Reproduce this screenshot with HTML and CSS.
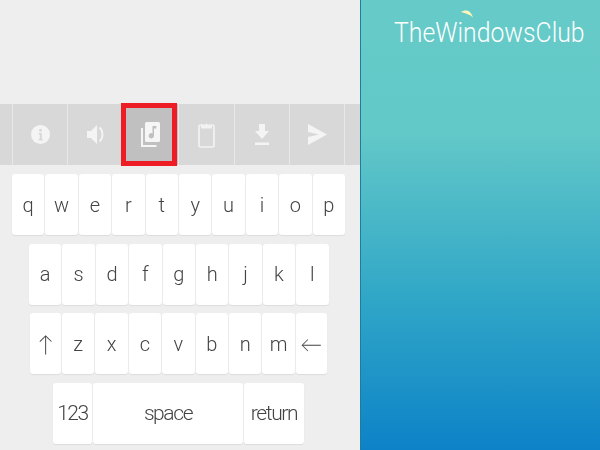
FILE: index.html
```html
<!DOCTYPE html>
<html lang="en">
<head>
    <meta charset="UTF-8">
    <title>Keyboard</title>
    <link rel="stylesheet" href="styles.css">
</head>
<body>
    <div class="phone">
        <div class="preview"></div>
        <div class="toolbar">
            <div class="tool tool-stub"></div>
            <div class="tool">
                <svg width="19" height="19" viewBox="0 0 19 19"><circle cx="9.500" cy="9.500" r="9.500" fill="#f4f4f4"/><circle cx="9.500" cy="5.200" r="1.500" fill="#d8d8d8"/><path d="M7.800 8h3v6h1v1.500H7.800V14h1V9.500h-1z" fill="#d8d8d8"/></svg>
            </div>
            <div class="tool">
                <svg width="17" height="21" viewBox="0 0 17 21"><path d="M0 7h4l6-6v19l-6-6H0z" fill="#f4f4f4"/><path d="M12.500 3.500c4 3.500 4 10.500 0 14" fill="none" stroke="#f4f4f4" stroke-width="1.800"/></svg>
            </div>
            <div class="tool tool-active">
                <svg width="19" height="25" viewBox="0 0 19 25"><rect x="4" y="0" width="15" height="20" rx="1.500" fill="#f6f6f6"/><path d="M11.500 4h3.800v2.400h-2.300v7.400a2.700 2.700 0 1 1-1.500-2.400z" fill="#c0c0c0"/><path d="M1 6v18h14.500" fill="none" stroke="#f6f6f6" stroke-width="2"/></svg>
            </div>
            <div class="tool">
                <svg width="17" height="27" viewBox="0 0 17 27"><path d="M4 4H2.500Q1 4 1 5.500v19Q1 26 2.500 26h12q1.500 0 1.500-1.500v-19Q16 4 14.500 4H13" fill="none" stroke="#f2f2f2" stroke-width="1.700"/><path d="M3 3.500h4.500a1 1 0 0 1 2 0H14v4H3z" fill="#f2f2f2"/></svg>
            </div>
            <div class="tool">
                <svg width="14" height="21" viewBox="0 0 14 21"><path d="M4 0h6v7h4l-7 8-7-8h4z" fill="#f4f4f4"/><rect x="0" y="18.500" width="14" height="2.500" fill="#f4f4f4"/></svg>
            </div>
            <div class="tool">
                <svg width="19" height="21" viewBox="0 0 19 21"><path d="M0 0l19 10.500L0 21v-8l11-2.500L0 8z" fill="#f4f4f4"/></svg>
            </div>
            <div class="tool tool-end"></div>
        </div>
        <div class="keyboard">
            <div class="row row-top">
                <div class="key">q</div><div class="key">w</div><div class="key">e</div><div class="key">r</div><div class="key">t</div><div class="key">y</div><div class="key">u</div><div class="key">i</div><div class="key">o</div><div class="key">p</div>
            </div>
            <div class="row row-home">
                <div class="key">a</div><div class="key">s</div><div class="key">d</div><div class="key">f</div><div class="key">g</div><div class="key">h</div><div class="key">j</div><div class="key">k</div><div class="key">l</div>
            </div>
            <div class="row row-shift">
                <div class="key key-arrow">↑</div><div class="key">z</div><div class="key">x</div><div class="key">c</div><div class="key">v</div><div class="key">b</div><div class="key">n</div><div class="key">m</div><div class="key key-arrow">←</div>
            </div>
            <div class="row row-bottom">
                <div class="key key-word">123</div><div class="key key-word">space</div><div class="key key-word">return</div>
            </div>
        </div>
    </div>
    <div class="side">
        <div class="logo">
            <span class="logo-text">TheWindowsClub</span>
            <svg class="logo-moon" width="12" height="8" viewBox="0 0 12 8"><path d="M0 2C4-.5 9.500-.5 12 7.500 9 4.500 5 3.500 0 2z" fill="#fdf6b8"/></svg>
        </div>
    </div>
</body>
</html>
```

FILE: styles.css
```css
html, body {
    margin: 0;
    height: 100%;
}
body {
    display: flex;
    width: 600px;
    height: 450px;
    overflow: hidden;
    font-family: Roboto, Lato, sans-serif;
}
.phone {
    flex: 0 0 361px;
    background: #eeeeee;
    border-right: 1px solid #1a7f9e;
    box-sizing: border-box;
}
.preview {
    height: 104px;
}
.toolbar {
    display: flex;
    height: 61px;
    background: #d8d8d8;
}
.tool {
    position: relative;
    flex: 0 0 55.4px;
    display: flex;
    align-items: center;
    justify-content: center;
    box-sizing: border-box;
    border-right: 1px solid #e8e8e8;
}
.tool-stub {
    flex-basis: 13px;
}
.tool-end {
    flex: 1;
    border-right: 0;
}
.tool-active {
    background: #c0c0c0;
}
.tool-active::after {
    content: "";
    position: absolute;
    top: -1px;
    bottom: -1px;
    left: -3px;
    right: 1px;
    border: 5px solid #ee1c25;
}
.keyboard {
    display: flex;
    flex-direction: column;
    gap: 8.5px;
    padding-top: 9px;
    will-change: opacity;
}
.row {
    display: grid;
    height: 61px;
    column-gap: 1px;
}
.row-top {
    grid-template-columns: repeat(10, 32.4px);
    margin-left: 12px;
}
.row-home {
    grid-template-columns: repeat(9, 32.4px);
    margin-left: 29px;
}
.row-shift {
    grid-template-columns: 31px repeat(7, 32.4px) 31px;
    margin-left: 30px;
}
.row-bottom {
    grid-template-columns: 39px 150px 60px;
    margin-left: 53px;
}
.key {
    display: flex;
    align-items: center;
    justify-content: center;
    background: #ffffff;
    border-radius: 3px;
    box-shadow: 0 1px 1px #dcdcdc;
    color: #444444;
    font-size: 20px;
    font-weight: 300;
    box-sizing: border-box;
}
.key-arrow {
    font-size: 22px;
}
.key-word {
    font-size: 21px;
    letter-spacing: -1.4px;
}
.side {
    flex: 1;
    background: linear-gradient(#66cbc8 0%, #62c8c8 30%, #2ea5c7 68%, #0d82c8 100%);
}
.logo {
    position: relative;
    padding: 16px 0 0 33px;
    color: #ffffff;
    font-size: 28px;
    font-weight: 300;
    white-space: nowrap;
}
.logo-text {
    display: inline-block;
    transform: scaleX(0.885);
    transform-origin: left;
}
.logo-moon {
    position: absolute;
    left: 100px;
    top: 10px;
}
```
